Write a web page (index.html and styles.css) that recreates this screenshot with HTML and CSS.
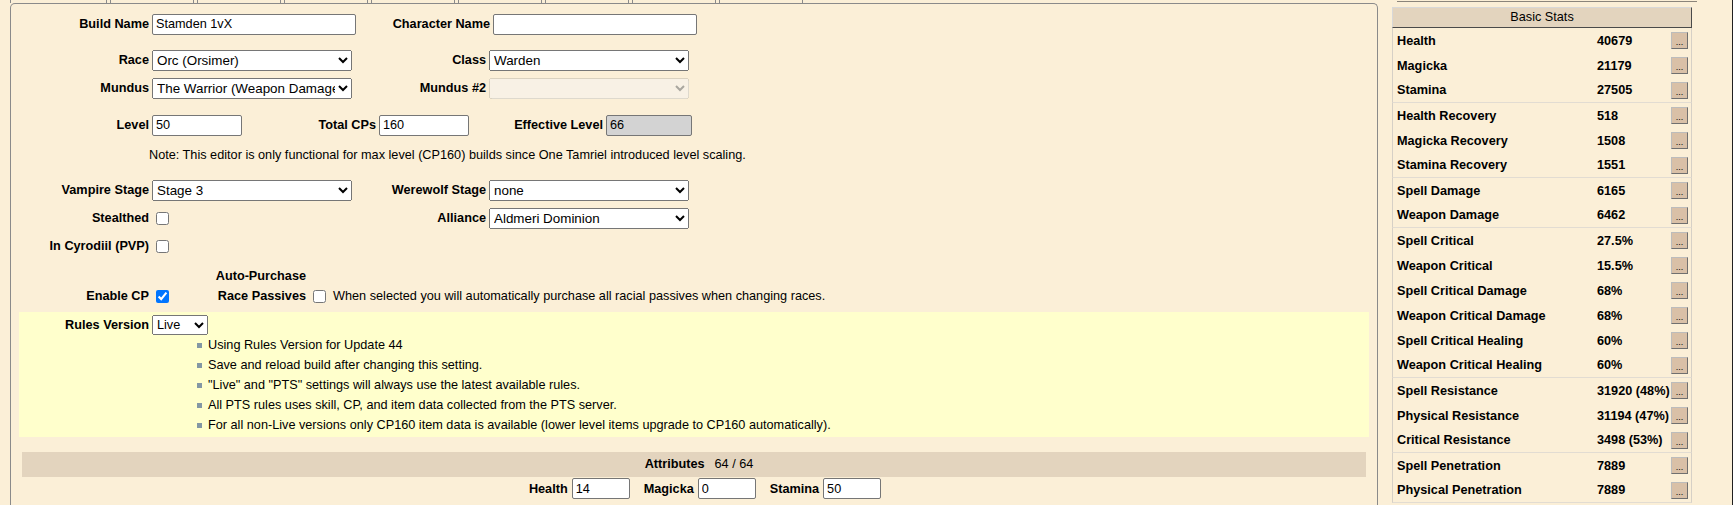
FILE: index.html
```html
<!DOCTYPE html>
<html lang="en">
<head>
  <meta charset="UTF-8" />
  <title>ESO Build Editor</title>
  <link rel="stylesheet" href="styles.css">
</head>
<body>
<div class="page">

  <!-- Main editor -->
  <div class="left">
    <div class="tabs">
      <span class="tab first"></span>
      <span class="tab"></span>
      <span class="tab"></span>
      <span class="tab"></span>
      <span class="tab"></span>
      <span class="tab"></span>
      <span class="tab"></span>
      <span class="tab"></span>
      <span class="tab"></span>
    </div>

    <div class="panel">
      <div class="row">
        <label class="lbl">Build Name</label>
        <input type="text" class="txt name" value="Stamden 1vX" />
        <label class="lbl2">Character Name</label>
        <input type="text" class="txt name" value="" />
      </div>

      <div class="row gap8">
        <label class="lbl">Race</label>
        <select class="sel"><option>Orc (Orsimer)</option></select>
        <label class="lbl2">Class</label>
        <select class="sel"><option>Warden</option></select>
      </div>
      <div class="row">
        <label class="lbl">Mundus</label>
        <select class="sel"><option>The Warrior (Weapon Damage)</option></select>
        <label class="lbl2">Mundus #2</label>
        <select class="sel" disabled><option></option></select>
      </div>

      <div class="row gap9">
        <label class="lbl">Level</label>
        <input type="text" class="txt short" value="50" />
        <label class="lbl2">Total CPs</label>
        <input type="text" class="txt short" value="160" />
        <label class="lbl2">Effective Level</label>
        <input type="text" class="txt short readonly" value="66" readonly />
      </div>
      <div class="note">Note: This editor is only functional for max level (CP160) builds since One Tamriel introduced level scaling.</div>

      <div class="row gap7">
        <label class="lbl">Vampire Stage</label>
        <select class="sel"><option>Stage 3</option></select>
        <label class="lbl2">Werewolf Stage</label>
        <select class="sel"><option>none</option></select>
      </div>
      <div class="row">
        <label class="lbl">Stealthed</label>
        <span class="cell"><input type="checkbox" /></span>
        <label class="lbl2">Alliance</label>
        <select class="sel"><option>Aldmeri Dominion</option></select>
      </div>
      <div class="row">
        <label class="lbl">In Cyrodiil (PVP)</label>
        <span class="cell"><input type="checkbox" /></span>
      </div>

      <div class="row cp-row">
        <label class="lbl">Enable CP</label>
        <input type="checkbox" checked />
        <label class="lbl2">Auto-Purchase<br>Race Passives</label>
        <input type="checkbox" />
        <span class="hint">When selected you will automatically purchase all racial passives when changing races.</span>
      </div>

      <div class="rules">
        <div class="rules-row">
          <label class="rules-lbl">Rules Version</label>
          <select class="sel ver"><option>Live</option></select>
        </div>
        <ul class="rules-list">
          <li>Using Rules Version for Update 44</li>
          <li>Save and reload build after changing this setting.</li>
          <li>"Live" and "PTS" settings will always use the latest available rules.</li>
          <li>All PTS rules uses skill, CP, and item data collected from the PTS server.</li>
          <li>For all non-Live versions only CP160 item data is available (lower level items upgrade to CP160 automatically).</li>
        </ul>
      </div>

      <div class="attr-bar"><b>Attributes</b><span class="attr-count">64 / 64</span></div>
      <div class="attr-row">
        <label>Health</label><input type="text" class="txt attr" value="14" />
        <label>Magicka</label><input type="text" class="txt attr" value="0" />
        <label>Stamina</label><input type="text" class="txt attr" value="50" />
      </div>
    </div>
  </div>

  <!-- Stats sidebar -->
  <div class="right">
    <div class="topline"></div>
    <div class="stats">
      <div class="stats-head">Basic Stats</div>
      <div class="srow"><span class="sname">Health</span><span class="sval">40679</span><button class="more">...</button></div>
      <div class="srow"><span class="sname">Magicka</span><span class="sval">21179</span><button class="more">...</button></div>
      <div class="srow sep"><span class="sname">Stamina</span><span class="sval">27505</span><button class="more">...</button></div>
      <div class="srow"><span class="sname">Health Recovery</span><span class="sval">518</span><button class="more">...</button></div>
      <div class="srow"><span class="sname">Magicka Recovery</span><span class="sval">1508</span><button class="more">...</button></div>
      <div class="srow sep"><span class="sname">Stamina Recovery</span><span class="sval">1551</span><button class="more">...</button></div>
      <div class="srow"><span class="sname">Spell Damage</span><span class="sval">6165</span><button class="more">...</button></div>
      <div class="srow sep"><span class="sname">Weapon Damage</span><span class="sval">6462</span><button class="more">...</button></div>
      <div class="srow"><span class="sname">Spell Critical</span><span class="sval">27.5%</span><button class="more">...</button></div>
      <div class="srow"><span class="sname">Weapon Critical</span><span class="sval">15.5%</span><button class="more">...</button></div>
      <div class="srow"><span class="sname">Spell Critical Damage</span><span class="sval">68%</span><button class="more">...</button></div>
      <div class="srow"><span class="sname">Weapon Critical Damage</span><span class="sval">68%</span><button class="more">...</button></div>
      <div class="srow"><span class="sname">Spell Critical Healing</span><span class="sval">60%</span><button class="more">...</button></div>
      <div class="srow sep"><span class="sname">Weapon Critical Healing</span><span class="sval">60%</span><button class="more">...</button></div>
      <div class="srow"><span class="sname">Spell Resistance</span><span class="sval">31920 (48%)</span><button class="more">...</button></div>
      <div class="srow"><span class="sname">Physical Resistance</span><span class="sval">31194 (47%)</span><button class="more">...</button></div>
      <div class="srow sep"><span class="sname">Critical Resistance</span><span class="sval">3498 (53%)</span><button class="more">...</button></div>
      <div class="srow"><span class="sname">Spell Penetration</span><span class="sval">7889</span><button class="more">...</button></div>
      <div class="srow sep"><span class="sname">Physical Penetration</span><span class="sval">7889</span><button class="more">...</button></div>
    </div>
  </div>

  <div class="scrollbar"></div>
</div>
</body>
</html>
```

FILE: styles.css
```css
/* Reset */
* { margin: 0; padding: 0; box-sizing: border-box; }

body {
  font-family: "Liberation Sans", Arial, sans-serif;
  font-size: 12.7px;
  color: #000;
  background: #fbefd7;
  height: 505px;
  overflow: hidden;
}

.page { display: flex; height: 505px; }

/* Left editor column */
.left { width: 1378px; padding-left: 10px; flex-shrink: 0; }

.tabs { display: flex; height: 3px; gap: 3px; }
.tab {
  width: 84px; height: 3px;
  border-left: 1px solid #8a8a8a;
  border-right: 1px solid #8a8a8a;
}
.tab.first { width: 97px; }

.panel {
  height: 502px;
  border: 1px solid #8a8a8a;
  border-bottom: none;
  border-radius: 5px 5px 0 0;
  padding-top: 6px;
}

.row { display: flex; align-items: center; height: 28px; }
.row.gap8 { margin-top: 8px; }
.row.gap9 { margin-top: 9px; }
.row.gap7 { margin-top: 7px; }

.lbl {
  width: 138px; margin-right: 3px; flex-shrink: 0;
  text-align: right; font-weight: bold;
}
.lbl2 {
  width: 134px; margin-right: 3px; flex-shrink: 0;
  text-align: right; font-weight: bold;
}
.cell { width: 200px; display: flex; align-items: center; }

.txt, .sel {
  font-family: "Liberation Sans", Arial, sans-serif;
  font-size: 12.7px;
  color: #000;
}
.txt {
  height: 21px; padding: 1px 3px;
  border: 1px solid #767676; border-radius: 2px;
  background: #fff;
}
.txt.name { width: 204px; }
.txt.short { width: 90px; }
.txt.readonly { width: 86px; background: #d3d3d3; }
.sel { width: 200px; height: 21px; font-size: 13.4px; }
.sel:disabled { color: #888; }

input[type=checkbox] { margin: 3px 3px 3px 4px; width: 13px; height: 13px; }

.note { height: 28px; line-height: 28px; margin-left: 138px; margin-top: 2px; }

.cp-row { align-items: flex-end; height: 40px; margin-top: 6px; line-height: 20px; }
.cp-row input[type=checkbox] { margin-bottom: 3px; }
.hint { margin-left: 4px; }

/* Rules version box */
.rules {
  margin: 6px 8px 0 8px;
  padding: 3px 0 2px;
  background: #ffffcc;
}
.rules-row { display: flex; align-items: center; height: 20px; }
.rules-lbl { width: 130px; margin-right: 3px; text-align: right; font-weight: bold; }
.sel.ver { width: 56px; height: 20px; font-size: 12.7px; }
.rules-list { list-style: none; padding-left: 189px; }
.rules-list li { line-height: 20px; position: relative; }
.rules-list li::before {
  content: ""; position: absolute;
  left: -11px; top: 8px;
  width: 5px; height: 5px;
  background: #8397a4;
}

/* Attributes */
.attr-bar {
  margin: 15px 11px 0 11px;
  height: 25px; line-height: 25px;
  background: #e3d4be;
  text-align: center;
  padding-left: 10px;
}
.attr-count { margin-left: 10px; }
.attr-row {
  display: flex; align-items: center; justify-content: center;
  height: 21px; margin-top: 1px; padding-left: 36px;
}
.attr-row label { font-weight: bold; margin-right: 4px; }
.txt.attr { width: 58px; margin-right: 14px; }

/* Right stats column */
.right { width: 334px; padding-left: 14px; flex-shrink: 0; }
.topline { margin: 1px 0 0 5px; width: 300px; border-top: 1px solid #8b857b; }

.stats {
  width: 300px; margin-top: 5px;
}
.stats-head {
  height: 21px; line-height: 19px;
  text-align: center;
  background: #e3d4be;
  border: 1px solid;
  border-color: #d8d8d8 #4a4a4a #4a4a4a #d8d8d8;
}
.srow {
  display: flex; align-items: center;
  height: 25px;
  padding: 0 3px 0 4px;
  border-left: 1px solid #d6d0c6;
  border-right: 1px solid #d6d0c6;
  font-weight: bold;
}
.srow.sep { border-bottom: 1px solid #e2dcd2; }
.sname { width: 200px; }
.sval { flex: 1; white-space: nowrap; }
.more {
  width: 17px; height: 17px;
  background: #d9c0a7;
  border: 1px solid;
  border-color: #bcbcbc #6f6f6f #6f6f6f #bcbcbc;
  font-size: 9px; line-height: 18px;
  font-family: "Liberation Sans", Arial, sans-serif;
  color: #000;
}

.scrollbar {
  width: 21px; margin-left: 20px;
  background: #f1f1f1;
  border-right: 5px solid #202020;
}
```
